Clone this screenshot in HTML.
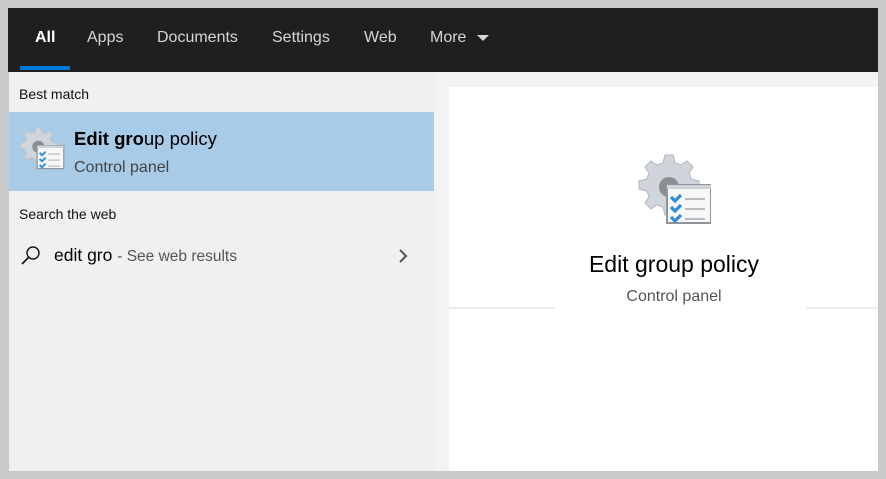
<!DOCTYPE html>
<html><head><meta charset="utf-8"><style>
*{margin:0;padding:0;box-sizing:border-box}
html,body{width:886px;height:479px;overflow:hidden;background:#c9c9c9;font-family:"Liberation Sans","DejaVu Sans",sans-serif}
.abs{position:absolute}
#top{left:8px;top:8px;width:870px;height:64px;background:#1f1f1f}
.tab{position:absolute;top:21px;color:#d6d6d6;font-size:16px}
#left{left:9px;top:72px;width:425px;height:399px;background:#f0f0f0}
#right{left:434px;top:72px;width:444px;height:399px;background:#f3f3f3}
#card{left:449px;top:87px;width:429px;height:384px;background:#fff}
</style></head><body>
<svg width="0" height="0" style="position:absolute"><defs>
<g id="ico">
<path d="M14 2l4 0 1 4 3 1 3-2 3 3-2 3 1 3 4 1 0 4-4 1-1 3 2 3-3 3-3-2-3 1-1 4-4 0-1-4-3-1-3 2-3-3 2-3-1-3-4-1 0-4 4-1 1-3-2-3 3-3 3 2 3-1z" fill="#cfd5db" stroke="#b8bec4" stroke-width=".6"/>
<circle cx="16" cy="18" r="5" fill="#8a8e92"/>
<rect x="15" y="17" width="22" height="19" fill="#f7f7f7" stroke="#8f959a"/>
<rect x="15" y="17" width="22" height="2" fill="#d0d4d8"/>
<g stroke="#2f8be0" stroke-width="1.6" fill="none"><path d="M17 23l2 2 3-3"/><path d="M17 28l2 2 3-3"/><path d="M17 33l2 2 3-3"/></g>
<g stroke="#b8bcc0" stroke-width="1"><path d="M24 24h10M24 29h10M24 34h10"/></g>
</g></defs></svg>
<div id="top" class="abs">
<div class="tab" style="left:27px;color:#fff;font-weight:bold">All</div>
<div class="tab" style="left:79px">Apps</div>
<div class="tab" style="left:149px">Documents</div>
<div class="tab" style="left:264px">Settings</div>
<div class="tab" style="left:356px">Web</div>
<div class="tab" style="left:422px">More</div>
<svg class="abs" style="left:468px;top:25px" width="14" height="10"><path d="M1 2h12l-6 6z" fill="#d6d6d6"/></svg>
<div class="abs" style="left:12px;top:58px;width:50px;height:4px;background:#0078d7"></div>
</div>
<div id="left" class="abs">
<div class="abs" style="left:10px;top:14px;font-size:14px;color:#111">Best match</div>
<div class="abs" style="left:0;top:40px;width:425px;height:79px;background:#a8cbe7"></div>
<svg class="abs" style="left:10px;top:53px" width="46" height="46" viewBox="0 0 38 38"><use href="#ico"/></svg>
<div class="abs" style="left:65px;top:56px;font-size:18.5px;color:#000"><b>Edit gro</b>up policy</div>
<div class="abs" style="left:65px;top:87px;font-size:16px;color:#444">Control panel</div>
<div class="abs" style="left:10px;top:134px;font-size:14px;color:#111">Search the web</div>
<svg class="abs" style="left:11px;top:173px" width="22" height="22"><circle cx="13" cy="8" r="6" fill="none" stroke="#111" stroke-width="1.4"/><path d="M9 12L2 19" stroke="#111" stroke-width="1.6"/></svg>
<div class="abs" style="left:45px;top:173px;font-size:17.5px;color:#000">edit gro <span style="font-size:15.5px;color:#555">- See web results</span></div>
<svg class="abs" style="left:389px;top:176px" width="12" height="16"><path d="M2 2l6 6-6 6" fill="none" stroke="#555" stroke-width="2"/></svg>
</div>
<div id="right" class="abs"></div>
<div id="card" class="abs">
<div class="abs" style="left:0;top:220px;width:429px;height:2px;background:#ececec"></div>
<div class="abs" style="left:106px;top:219px;width:251px;height:4px;background:#fff"></div>
<svg class="abs" style="left:188px;top:64px" width="74" height="80" viewBox="0 0 37 40"><use href="#ico"/></svg>
<div class="abs" style="left:0;width:450px;top:164px;text-align:center;font-size:23px;color:#000">Edit group policy</div>
<div class="abs" style="left:0;width:450px;top:201px;text-align:center;font-size:16px;color:#555">Control panel</div>
</div>
</body></html>
